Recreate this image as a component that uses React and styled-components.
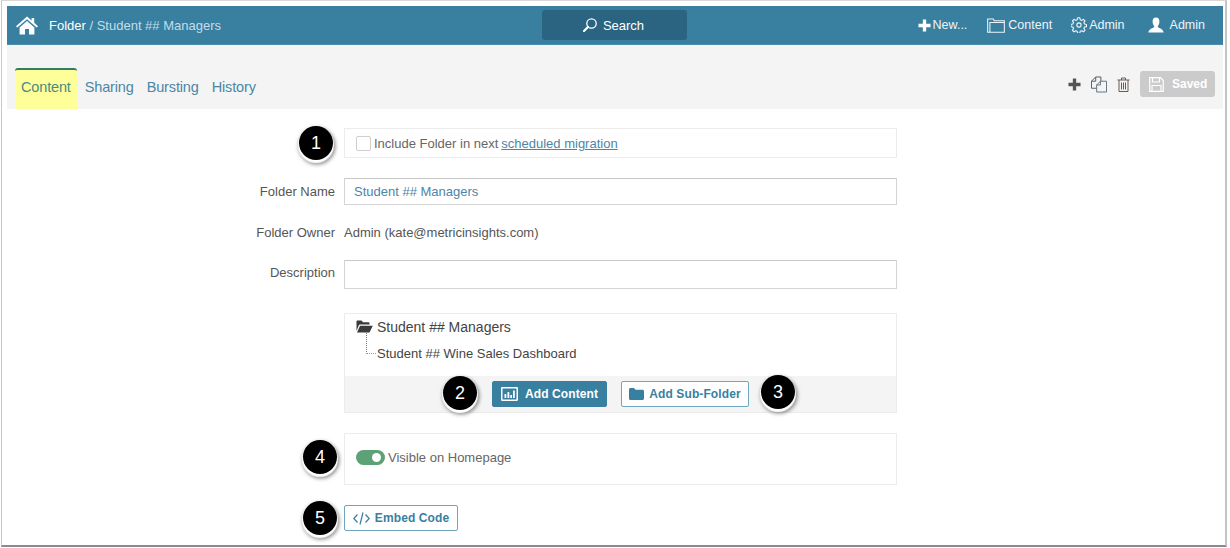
import styled, { createGlobalStyle } from "styled-components";

const Global = createGlobalStyle`
  html, body {
    margin: 0;
    padding: 0;
    background: #fff;
    overflow: hidden;
  }
  body {
    font-family: "Liberation Sans", Arial, sans-serif;
    font-size: 13px;
    color: #555;
  }
`;

const Frame = styled.div`
  box-sizing: border-box;
  width: 1226px;
  height: 547px;
  margin-left: 1px;
  padding: 5px 2px 0 5px;
  border: 1px solid #d8d8d8;
  border-bottom: 2px solid #8a8a8a;
  border-right: 2px solid #c4c4c4;
  border-left: 1px solid #c8c8c8;
  overflow: hidden;
`;

const NavBar = styled.header`
  height: 39px;
  background: #387fa0;
  display: flex;
  align-items: center;
  position: relative;
  color: #fff;
  border-bottom: 1px solid #4a8cab;
  box-sizing: border-box;
`;

const Crumbs = styled.div`
  box-sizing: border-box;
  display: flex;
  align-items: center;
  padding-left: 9px;
  width: 535px;
  font-size: 13px;
`;

const CrumbText = styled.span`
  margin-left: 11px;
  color: #fff;
  span {
    color: #c3dde9;
  }
`;

const SearchButton = styled.div`
  width: 145px;
  height: 30px;
  background: #2a6481;
  border-radius: 3px;
  display: flex;
  align-items: center;
  justify-content: center;
  gap: 5px;
  padding-right: 3px;
  box-sizing: border-box;
  font-size: 13px;
`;

const NavLinks = styled.nav`
  margin-left: auto;
  display: flex;
  align-items: center;
  padding-right: 18px;
`;

const NavLink = styled.div`
  display: flex;
  align-items: center;
  gap: ${(p) => p.$gap || 3}px;
  margin-left: ${(p) => p.$ml || 0}px;
  font-size: 12.5px;
  color: #eef5f8;
`;

const SubBar = styled.div`
  height: 64px;
  background: #f4f4f4;
  display: flex;
  align-items: flex-end;
  justify-content: space-between;
  padding: 0 8px 0 8px;
`;

const Tabs = styled.div`
  display: flex;
  align-items: flex-end;
`;

const Tab = styled.div`
  box-sizing: border-box;
  height: 41px;
  padding: 0 6px 0 ${(p) => (p.$active ? 6 : 7)}px;
  margin-right: ${(p) => (p.$active ? 1 : 0)}px;
  line-height: 34px;
  font-size: 14.5px;
  letter-spacing: -0.15px;
  color: ${(p) => (p.$active ? "#4d8a7e" : "#4c86a6")};
  background: ${(p) => (p.$active ? "#ffff99" : "transparent")};
  border-top: 2px solid ${(p) => (p.$active ? "#2f7d62" : "transparent")};
  border-radius: 3px 3px 0 0;
`;

const Actions = styled.div`
  display: flex;
  align-items: center;
  height: 26px;
  margin-bottom: 12px;
  gap: 10px;
`;

const SavedButton = styled.div`
  box-sizing: border-box;
  width: 75px;
  height: 26px;
  background: #cbcbcb;
  border-radius: 3px;
  color: #fff;
  font-weight: 700;
  font-size: 12px;
  display: flex;
  align-items: center;
  gap: 8px;
  padding-left: 9px;
`;

const Form = styled.main`
  display: grid;
  grid-template-columns: 328px 553px;
  column-gap: 9px;
  padding-top: 19px;
`;

const Row = styled.div`
  display: contents;
`;

const Label = styled.div`
  color: #555;
  font-size: 13px;
  text-align: right;
  align-self: center;
  margin-top: ${(p) => p.$mt || 0}px;
  padding-bottom: ${(p) => p.$pb || 0}px;
`;

const Control = styled.div`
  position: relative;
  margin-top: ${(p) => p.$mt || 0}px;
`;

const Panel = styled.div`
  box-sizing: border-box;
  height: ${(p) => p.$h}px;
  border: 1px solid #ececec;
  display: flex;
  align-items: center;
  padding: 0 0 ${(p) => p.$pb || 0}px 11px;
  font-size: 13px;
  color: #666;
`;

const CheckBox = styled.span`
  box-sizing: border-box;
  width: 15px;
  height: 15px;
  border: 1px solid #cfcfcf;
  border-radius: 2px;
  margin-right: 3px;
`;

const MigrationLink = styled.a`
  color: #4c86a6;
  text-decoration: underline;
  margin-left: 3px;
`;

const TextField = styled.div`
  box-sizing: border-box;
  height: ${(p) => p.$h}px;
  border: 1px solid #d4d4d4;
  border-top-color: #c8c8c8;
  padding-left: 9px;
  display: flex;
  align-items: center;
  color: #4c86a6;
  font-size: 13px;
`;

const OwnerValue = styled.div`
  font-size: 13px;
  color: #555;
  line-height: 15px;
`;

const TreeBox = styled.div`
  box-sizing: border-box;
  height: 100px;
  border: 1px solid #ececec;
  display: flex;
  flex-direction: column;
`;

const TreeBody = styled.div`
  flex: 1;
  padding: 4px 0 0 11px;
  position: relative;
`;

const TreeRoot = styled.div`
  display: flex;
  align-items: center;
  gap: 4px;
  height: 17px;
  font-size: 14px;
  color: #444;
`;

const TreeChild = styled.div`
  margin: 11px 0 0 21px;
  font-size: 13px;
  color: #444;
  line-height: 15px;
  position: relative;
  &::before {
    content: "";
    position: absolute;
    left: -11px;
    top: -13px;
    width: 9px;
    height: 20px;
    border-left: 1px dotted #777;
    border-bottom: 1px dotted #999;
  }
`;

const TreeFooter = styled.div`
  height: 36px;
  background: #f4f4f4;
  display: flex;
  align-items: center;
  padding-left: 147px;
  gap: 14px;
`;

const Button = styled.div`
  box-sizing: border-box;
  height: 26px;
  width: ${(p) => p.$w}px;
  border-radius: 2px;
  border: 1px solid ${(p) => (p.$solid ? "#387fa0" : "#6ea5bf")};
  background: ${(p) => (p.$solid ? "#387fa0" : "#fff")};
  color: ${(p) => (p.$solid ? "#fff" : "#387fa0")};
  font-weight: 700;
  font-size: 12px;
  letter-spacing: 0.1px;
  display: flex;
  align-items: center;
  justify-content: center;
  gap: ${(p) => p.$gap || 7}px;
`;

const Toggle = styled.span`
  width: 29px;
  height: 15px;
  border-radius: 8px;
  background: #5da177;
  margin-right: 3px;
  position: relative;
  &::after {
    content: "";
    position: absolute;
    right: 4px;
    top: 3px;
    width: 9px;
    height: 9px;
    border-radius: 50%;
    background: #fff;
  }
`;

const Marker = styled.div`
  position: absolute;
  left: ${(p) => p.$x}px;
  top: ${(p) => p.$y}px;
  width: 34px;
  height: 34px;
  border-radius: 50%;
  background: #000;
  color: #fff;
  font-size: 18px;
  display: flex;
  align-items: center;
  justify-content: center;
  box-shadow: 0 2px 1px 1px #fff, 1px 3px 4px 1px rgba(0, 0, 0, 0.55);
`;

const HomeIcon = () => (
  <svg width="22" height="19" viewBox="0 0 22 19">
    <path fill="#fff" d="M11 0.5 L15.6 4.5 V2 H18.2 V6.8 L22 10.2 L20.7 11.6 L11 3.2 L1.3 11.6 L0 10.2 Z M3.6 11.4 L11 5 L18.4 11.4 V18.6 H13 V13 H9 V18.6 H3.6 Z" />
  </svg>
);

const SearchIcon = () => (
  <svg width="16" height="16" viewBox="0 0 16 16" fill="none" stroke="#fff">
    <circle cx="9.5" cy="6.5" r="4.7" strokeWidth="1.3" />
    <path d="M6 10 L2 14" strokeWidth="2.2" strokeLinecap="round" />
  </svg>
);

const PlusIcon = ({ size, color }) => (
  <svg width={size} height={size} viewBox="0 0 14 14">
    <path fill={color} d="M5.2 0.5 H8.8 V5.2 H13.5 V8.8 H8.8 V13.5 H5.2 V8.8 H0.5 V5.2 H5.2 Z" />
  </svg>
);

const FolderOutlineIcon = () => (
  <svg width="18" height="15" viewBox="0 0 19 16" fill="none" stroke="#eef5f8" strokeWidth="1.1">
    <path d="M0.6 15.2 V1 H6.6 L7.6 3 H18.4 V15.2 Z" />
    <path d="M3 15 V4.8 H18.2" />
  </svg>
);

const GearIcon = () => (
  <svg width="16" height="16" viewBox="0 0 24 24" fill="none" stroke="#eef5f8" strokeWidth="1.7" strokeLinejoin="round">
    <circle cx="12" cy="12" r="3.2" />
    <path d="M10.3 2h3.4l.6 3 2.3 1 2.6-1.7 2.4 2.4-1.7 2.6 1 2.3 3 .6v3.4l-3 .6-1 2.3 1.7 2.6-2.4 2.4-2.6-1.7-2.3 1-.6 3h-3.4l-.6-3-2.3-1-2.6 1.7-2.4-2.4 1.7-2.6-1-2.3-3-.6v-3.4l3-.6 1-2.3-1.7-2.6 2.4-2.4 2.6 1.7 2.3-1z" transform="translate(-.2 -.8) scale(.98)" />
  </svg>
);

const UserIcon = () => (
  <svg width="16" height="16" viewBox="0 0 16 16">
    <path fill="#fff" d="M8 0.5 C10.6 0.5 11.6 2.6 11.4 5 C11.2 7 10.4 8.4 9.8 9 C9.7 10 10.2 10.4 11.2 10.9 C13 11.6 15.2 12.4 15.6 15.5 H0.4 C0.8 12.4 3 11.6 4.8 10.9 C5.8 10.4 6.3 10 6.2 9 C5.6 8.4 4.8 7 4.6 5 C4.4 2.6 5.4 0.5 8 0.5 Z" />
  </svg>
);

const CopyIcon = () => (
  <svg width="16" height="17" viewBox="0 0 17 17" fill="none" stroke="#555" strokeWidth="1">
    <path d="M0.5 5 L5 0.5 H10.5 V5" />
    <path d="M5 0.5 V5 H0.5 V12.5 H6" />
    <path d="M6 9 L10 5 H16.5 V16.5 H6 Z" fill="#f4f4f4" stroke="#5a6f80" />
    <path d="M10 5 V9 H6" stroke="#5a6f80" />
  </svg>
);

const TrashIcon = () => (
  <svg width="13" height="15" viewBox="0 0 13 15" fill="none" stroke="#6b5a55" strokeWidth="1">
    <path d="M0.5 3 H12.5 M4.5 3 V1 H8.5 V3" />
    <path d="M2 3 V14.5 H11 V3" />
    <path d="M4.5 5.5 V12.5 M6.5 5.5 V12.5 M8.5 5.5 V12.5" />
  </svg>
);

const SaveIcon = () => (
  <svg width="15" height="15" viewBox="0 0 15 15" fill="none" stroke="#fff" strokeWidth="1.2">
    <path d="M0.7 0.7 H11.5 L14.3 3.5 V14.3 H0.7 Z" />
    <path d="M3.5 1 V5 H10.5 V1 M3 14 V8.5 H12 V14" />
  </svg>
);

const OpenFolderIcon = () => (
  <svg width="17" height="13" viewBox="0 0 17 13">
    <path fill="#3a3a3a" d="M0.5 11 V1.5 C0.5 1 1 0.5 1.5 0.5 H5.5 L7 2.2 H12.5 C13 2.2 13.5 2.7 13.5 3.2 V4.6 H4 C3.4 4.6 3 4.9 2.7 5.4 Z M1 12.5 L4 5.8 H16.8 L13.5 12.5 Z" />
  </svg>
);

const ChartIcon = () => (
  <svg width="17" height="14" viewBox="0 0 17 14">
    <rect x="0.7" y="0.7" width="15.6" height="12.6" rx="1" fill="none" stroke="#fff" strokeWidth="1.6" />
    <path fill="#fff" d="M3.5 7 H5.3 V11 H3.5 Z M6.5 5 H8.3 V11 H6.5 Z M9.3 8 H11 V11 H9.3 Z M12 3.5 H13.8 V11 H12 Z" />
  </svg>
);

const FolderIcon = () => (
  <svg width="15" height="12" viewBox="0 0 15 12">
    <path fill="#387fa0" d="M0 1.5 C0 0.7 0.6 0 1.4 0 H5 L6.5 1.7 H13.5 C14.3 1.7 15 2.3 15 3 V10.5 C15 11.3 14.3 12 13.5 12 H1.4 C0.6 12 0 11.3 0 10.5 Z" />
  </svg>
);

const CodeIcon = () => (
  <svg width="17" height="13" viewBox="0 0 17 13" fill="none" stroke="#387fa0" strokeWidth="1.2">
    <path d="M4.5 2.5 L0.8 6.5 L4.5 10.5 M12.5 2.5 L16.2 6.5 L12.5 10.5 M10 0.5 L7 12.5" />
  </svg>
);

export default function App() {
  return (
    <>
      <Global />
      <Frame>
        <NavBar>
          <Crumbs>
            <HomeIcon />
            <CrumbText>
              Folder <span>/ Student ## Managers</span>
            </CrumbText>
          </Crumbs>
          <SearchButton>
            <SearchIcon />
            Search
          </SearchButton>
          <NavLinks>
            <NavLink $gap={2}>
              <PlusIcon size={13} color="#fff" />
              New...
            </NavLink>
            <NavLink $ml={20} $gap={3}>
              <FolderOutlineIcon />
              Content
            </NavLink>
            <NavLink $ml={19} $gap={2}>
              <GearIcon />
              Admin
            </NavLink>
            <NavLink $ml={23} $gap={6}>
              <UserIcon />
              Admin
            </NavLink>
          </NavLinks>
        </NavBar>

        <SubBar>
          <Tabs>
            <Tab $active>Content</Tab>
            <Tab>Sharing</Tab>
            <Tab>Bursting</Tab>
            <Tab>History</Tab>
          </Tabs>
          <Actions>
            <PlusIcon size={13} color="#555" />
            <CopyIcon />
            <TrashIcon />
            <SavedButton>
              <SaveIcon />
              Saved
            </SavedButton>
          </Actions>
        </SubBar>

        <Form>
          <Row>
            <div />
            <Control>
              <Marker $x={-45} $y={-2}>1</Marker>
              <Panel $h={30}>
                <CheckBox />
                Include Folder in next
                <MigrationLink>scheduled migration</MigrationLink>
              </Panel>
            </Control>
          </Row>
          <Row>
            <Label $mt={20}>Folder Name</Label>
            <Control $mt={20}>
              <TextField $h={27}>Student ## Managers</TextField>
            </Control>
          </Row>
          <Row>
            <Label $mt={20}>Folder Owner</Label>
            <Control $mt={20}>
              <OwnerValue>Admin (kate@metricinsights.com)</OwnerValue>
            </Control>
          </Row>
          <Row>
            <Label $mt={20} $pb={5}>Description</Label>
            <Control $mt={20}>
              <TextField $h={29} />
            </Control>
          </Row>
          <Row>
            <div />
            <Control $mt={24}>
              <TreeBox>
                <TreeBody>
                  <TreeRoot>
                    <OpenFolderIcon />
                    Student ## Managers
                  </TreeRoot>
                  <TreeChild>Student ## Wine Sales Dashboard</TreeChild>
                </TreeBody>
                <TreeFooter>
                  <Button $solid $w={115}>
                    <ChartIcon />
                    Add Content
                  </Button>
                  <Button $w={128} $gap={5}>
                    <FolderIcon />
                    Add Sub-Folder
                  </Button>
                </TreeFooter>
              </TreeBox>
              <Marker $x={99} $y={63}>2</Marker>
              <Marker $x={417} $y={62}>3</Marker>
            </Control>
          </Row>
          <Row>
            <div />
            <Control $mt={20}>
              <Marker $x={-41} $y={7}>4</Marker>
              <Panel $h={52} $pb={4}>
                <Toggle />
                Visible on Homepage
              </Panel>
            </Control>
          </Row>
          <Row>
            <div />
            <Control $mt={20}>
              <Marker $x={-41} $y={-4}>5</Marker>
              <Button $w={114} $gap={5}>
                <CodeIcon />
                Embed Code
              </Button>
            </Control>
          </Row>
        </Form>
      </Frame>
    </>
  );
}
